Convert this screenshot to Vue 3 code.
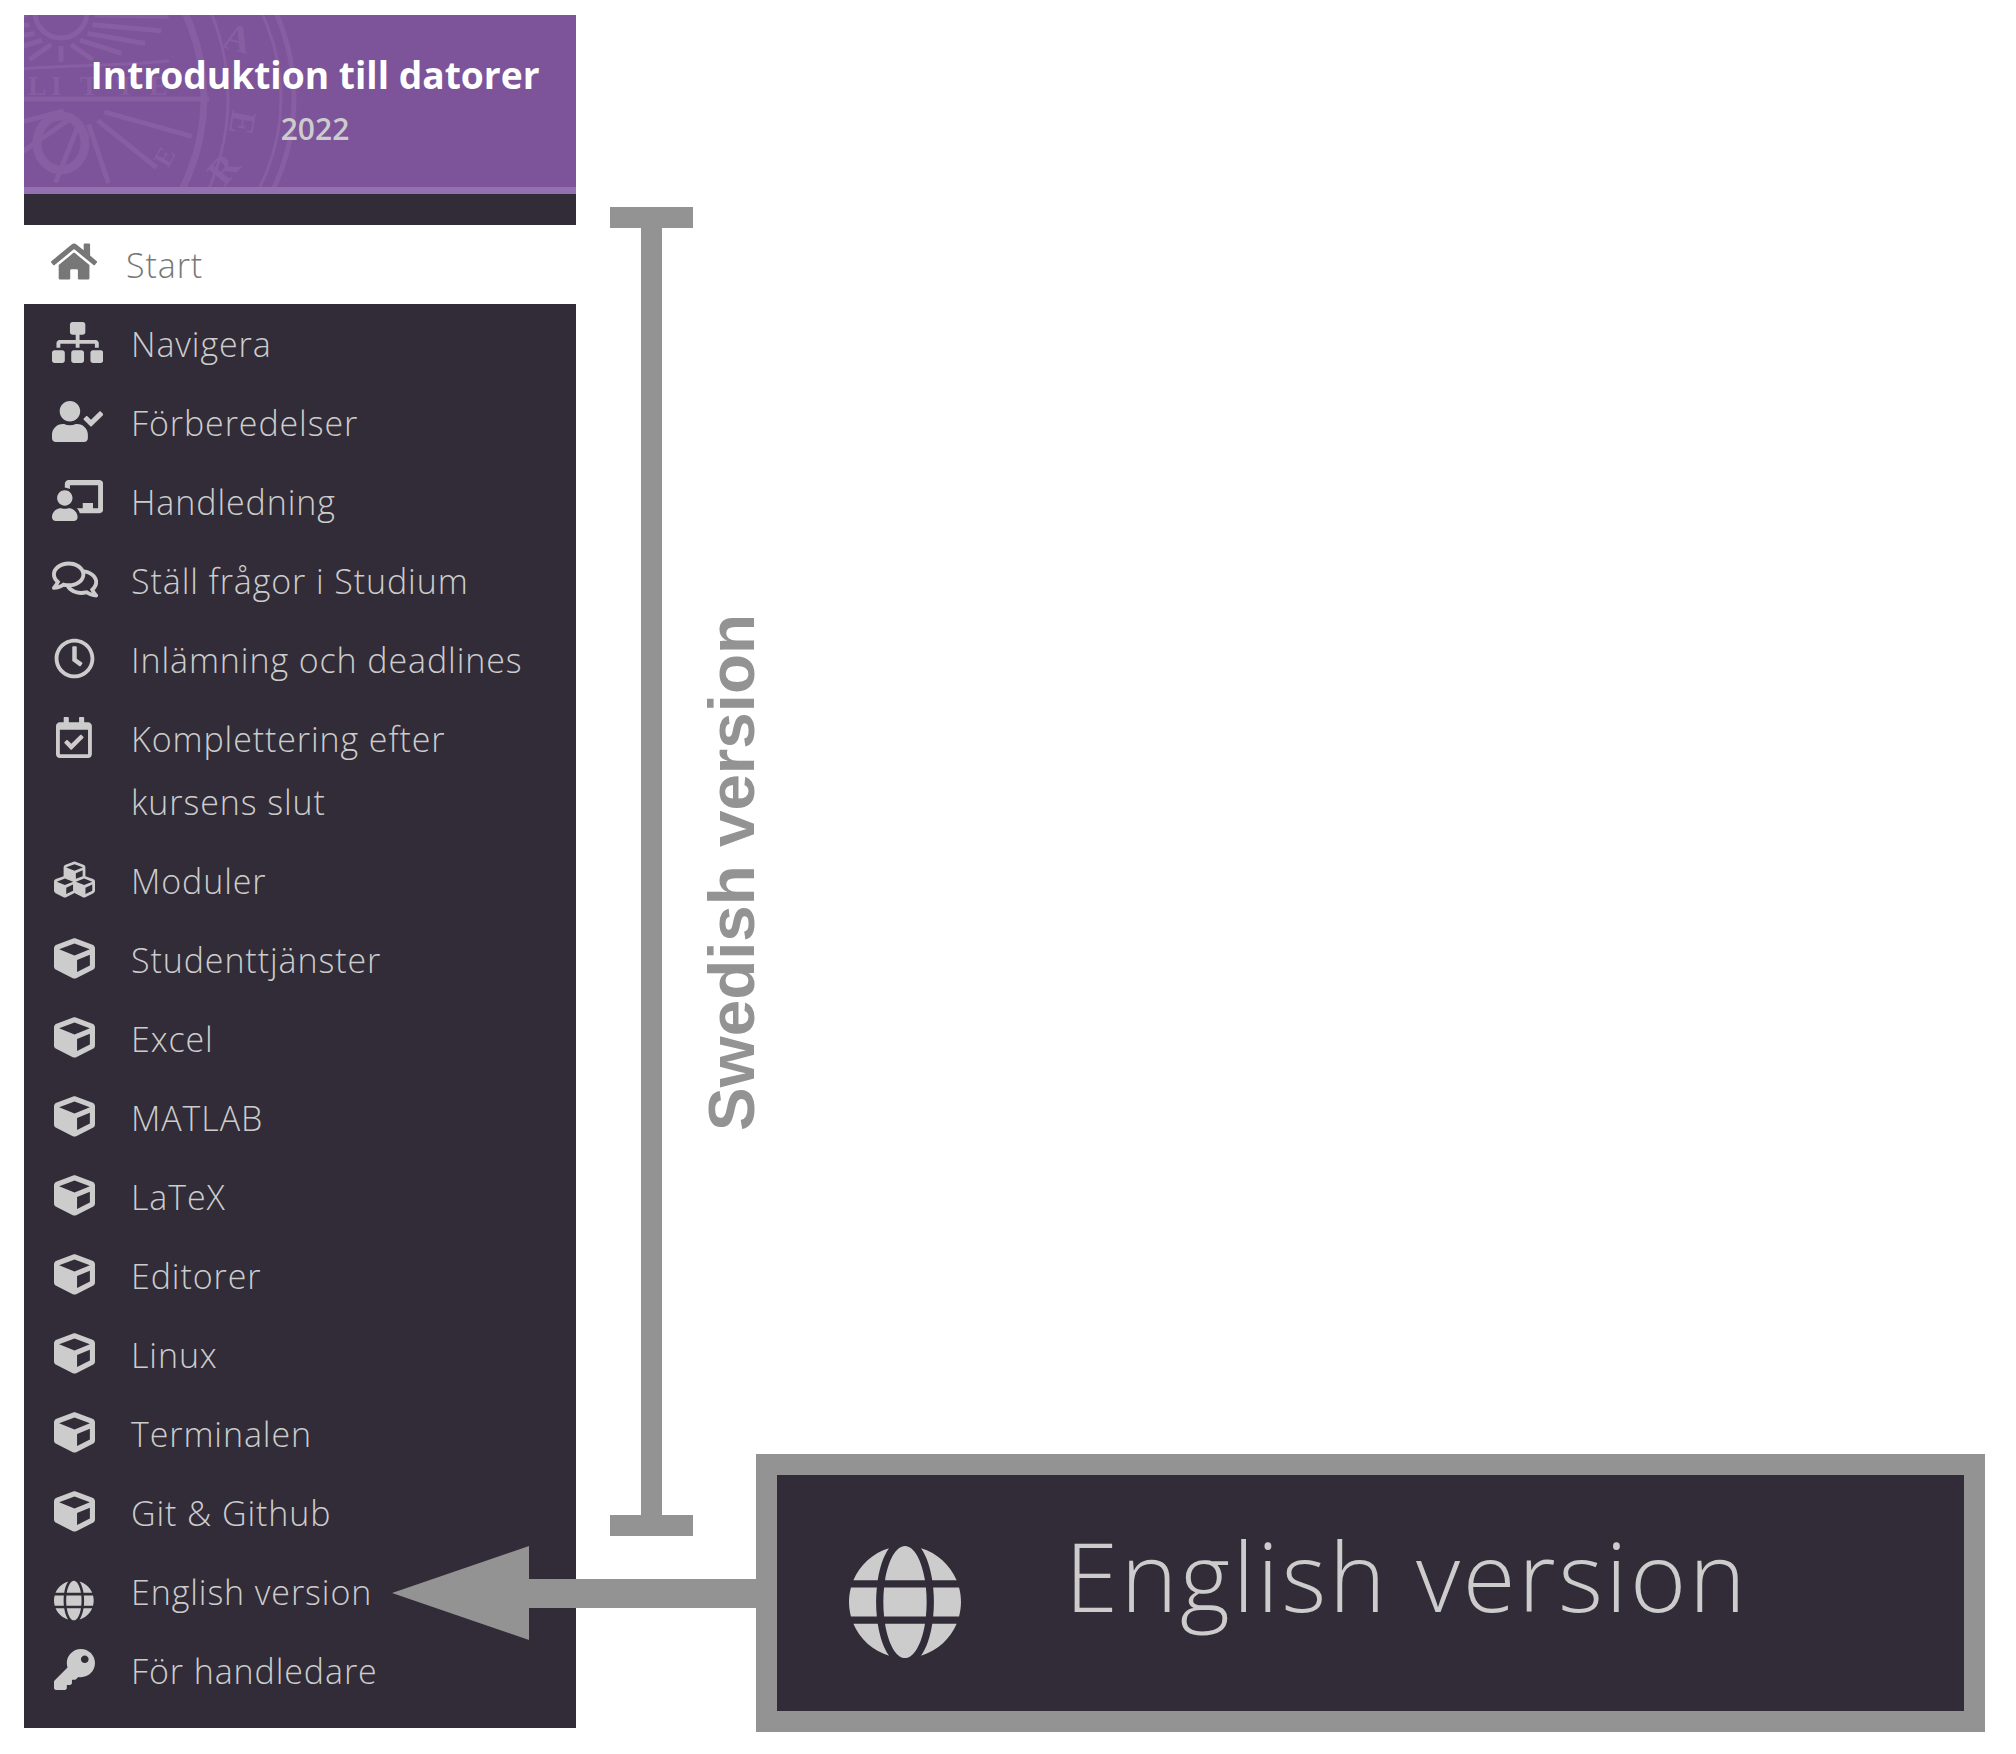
<script setup>
const P = {
  home: [576, 'M280.37 148.26L96 300.11V464a16 16 0 0 0 16 16l112.06-.29a16 16 0 0 0 15.92-16V368a16 16 0 0 1 16-16h64a16 16 0 0 1 16 16v95.64a16 16 0 0 0 16 16.05L464 480a16 16 0 0 0 16-16V300L295.67 148.26a12.19 12.19 0 0 0-15.3 0zM571.6 251.47L488 182.56V44.05a12 12 0 0 0-12-12h-56a12 12 0 0 0-12 12v72.61L318.47 43a48 48 0 0 0-61 0L4.34 251.47a12 12 0 0 0-1.6 16.9l25.5 31A12 12 0 0 0 45.15 301l235.22-193.74a12.19 12.19 0 0 1 15.3 0L530.9 301a12 12 0 0 0 16.9-1.6l25.5-31a12 12 0 0 0-1.7-16.93z'],
  sitemap: [640, 'M128 352H32c-17.67 0-32 14.33-32 32v96c0 17.67 14.33 32 32 32h96c17.67 0 32-14.33 32-32v-96c0-17.67-14.33-32-32-32zm-24-80h192v48h48v-48h192v48h48v-57.59c0-21.17-17.23-38.41-38.41-38.41H344v-64h40c17.67 0 32-14.33 32-32V32c0-17.67-14.33-32-32-32H256c-17.67 0-32 14.33-32 32v96c0 17.67 14.33 32 32 32h40v64H94.41C73.23 224 56 241.23 56 262.41V320h48v-48zm264 80h-96c-17.67 0-32 14.33-32 32v96c0 17.67 14.33 32 32 32h96c17.67 0 32-14.33 32-32v-96c0-17.67-14.33-32-32-32zm240 0h-96c-17.67 0-32 14.33-32 32v96c0 17.67 14.33 32 32 32h96c17.67 0 32-14.33 32-32v-96c0-17.67-14.33-32-32-32z'],
  userCheck: [640, 'M224 256c70.7 0 128-57.3 128-128S294.7 0 224 0 96 57.3 96 128s57.3 128 128 128zm89.6 32h-16.7c-22.2 10.2-46.9 16-72.9 16s-50.6-5.8-72.9-16h-16.7C60.2 288 0 348.2 0 422.4V464c0 26.5 21.5 48 48 48h352c26.5 0 48-21.5 48-48v-41.6c0-74.2-60.2-134.4-134.4-134.4zm323-128.4l-27.8-28.1c-4.6-4.7-12.1-4.7-16.8-.1l-104.8 104-45.5-45.8c-4.6-4.7-12.1-4.7-16.8-.1l-28.1 27.9c-4.7 4.6-4.7 12.1-.1 16.8l81.7 82.3c4.6 4.7 12.1 4.7 16.8.1l141.3-140.2c4.6-4.7 4.7-12.2.1-16.8z'],
  chalk: [640, 'M208 352c-2.39 0-4.78.35-7.06 1.09C187.98 357.3 174.35 360 160 360c-14.35 0-27.98-2.7-40.95-6.91-2.28-.74-4.66-1.09-7.05-1.09C49.94 352-.33 402.48 0 464.62.14 490.88 21.73 512 48 512h224c26.27 0 47.86-21.12 48-47.38.33-62.14-49.94-112.62-112-112.62zm-48-32c53.02 0 96-42.98 96-96s-42.98-96-96-96-96 42.98-96 96 42.98 96 96 96zM592 0H208c-26.47 0-48 22.25-48 49.59V96c23.42 0 45.1 6.78 64 17.8V64h352v288h-64v-64H384v64h-76.24c19.1 16.69 33.12 38.73 39.69 64H592c26.47 0 48-22.25 48-49.59V49.59C640 22.25 618.47 0 592 0z'],
  comments: [576, 'M532 386.2c27.5-27.1 44-61.1 44-98.2 0-80-76.5-146.1-176.2-157.9C368.3 72.5 294.3 32 208 32 93.1 32 0 103.6 0 192c0 37 16.5 71 44 98.2-15.3 30.7-37.3 54.5-37.7 54.9-6.3 6.7-8.1 16.5-4.4 25 3.6 8.5 12 14 21.2 14 53.5 0 96.7-20.2 125.2-38.8 9.2 2.1 18.7 3.7 28.4 4.9C208.1 407.6 281.8 448 368 448c20.8 0 40.8-2.4 59.8-6.8C456.3 459.7 499.4 480 553 480c9.2 0 17.5-5.5 21.2-14 3.6-8.5 1.9-18.3-4.4-25-.4-.3-22.5-24.1-37.8-54.8zm-392.8-92.3L122.1 305c-14.1 9.1-28.5 16.3-43.1 21.4 2.7-4.7 5.4-9.7 8-14.8l15.5-31.1L77.7 256C64.2 242.6 48 220.7 48 192c0-60.7 73.3-112 160-112s160 51.3 160 112-73.3 112-160 112c-16.5 0-33-1.9-49-5.6l-19.8-4.5zM498.3 352l-24.7 24.4 15.5 31.1c2.6 5.1 5.3 10.1 8 14.8-14.6-5.1-29-12.3-43.1-21.4l-17.1-11.1-19.9 4.6c-16 3.7-32.5 5.6-49 5.6-54 0-102.2-20.1-131.3-49.7C338 339.5 416 272.9 416 192c0-3.4-.4-6.7-.7-10C479.7 196.5 528 238.8 528 288c0 28.7-16.2 50.6-29.7 64z'],
  clock: [512, 'M256 8C119 8 8 119 8 256s111 248 248 248 248-111 248-248S393 8 256 8zm0 448c-110.5 0-200-89.5-200-200S145.5 56 256 56s200 89.5 200 200-89.5 200-200 200zm61.8-104.4l-84.9-61.7c-3.1-2.3-4.9-5.9-4.9-9.7V116c0-6.6 5.4-12 12-12h32c6.6 0 12 5.4 12 12v141.7l66.8 48.6c5.4 3.9 6.5 11.4 2.6 16.8L334.6 349c-3.9 5.3-11.4 6.5-16.8 2.6z'],
  calendar: [448, 'M400 64h-48V12c0-6.627-5.373-12-12-12h-40c-6.627 0-12 5.373-12 12v52H160V12c0-6.627-5.373-12-12-12h-40c-6.627 0-12 5.373-12 12v52H48C21.49 64 0 85.49 0 112v352c0 26.51 21.49 48 48 48h352c26.51 0 48-21.49 48-48V112c0-26.51-21.49-48-48-48zm-6 400H54a6 6 0 0 1-6-6V160h352v298a6 6 0 0 1-6 6zm-52.849-200.65L198.842 404.519c-4.705 4.667-12.303 4.637-16.971-.068l-75.091-75.699c-4.667-4.705-4.637-12.303.068-16.971l22.719-22.536c4.705-4.667 12.303-4.637 16.97.069l44.104 44.461 111.072-110.181c4.705-4.667 12.303-4.637 16.971.068l22.536 22.718c4.667 4.705 4.636 12.303-.069 16.97z'],
  cubes: [512, 'M488.6 250.2L392 214V105.5c0-15-9.3-28.4-23.4-33.7l-100-37.5c-8.1-3.1-17.1-3.1-25.3 0l-100 37.5c-14.1 5.3-23.4 18.7-23.4 33.7V214l-96.6 36.2C9.3 255.5 0 268.9 0 283.9V394c0 13.6 7.7 26.1 19.9 32.2l100 50c10.1 5.1 22.1 5.1 32.2 0l103.9-52 103.9 52c10.1 5.1 22.1 5.1 32.2 0l100-50c12.2-6.1 19.9-18.6 19.9-32.2V283.9c0-15-9.3-28.4-23.4-33.7zM358 214.8l-85 31.9v-68.2l85-37v73.3zM154 104.1l102-38.2 102 38.2v.6l-102 41.4-102-41.4v-.6zm84 291.1l-85 42.5v-79.1l85-38.8v75.4zm0-112l-102 41.4-102-41.4v-.6l102-38.2 102 38.2v.6zm240 112l-85 42.5v-79.1l85-38.8v75.4zm0-112l-102 41.4-102-41.4v-.6l102-38.2 102 38.2v.6z'],
  cube: [512, 'M239.1 6.3l-208 78c-18.7 7-31.1 25-31.1 45v225.1c0 18.2 10.3 34.8 26.5 42.9l208 104c13.5 6.8 29.4 6.8 42.9 0l208-104c16.3-8.1 26.5-24.8 26.5-42.9V129.3c0-20-12.4-37.9-31.1-44.9l-208-78C262 2.2 250 2.2 239.1 6.3zM256 68.4l192 72v1.1l-192 78-192-78v-1.1l192-72zm32 356V275.5l160-65v133.9l-160 80z'],
  globe: [496, 'M336.5 160C322 70.7 287.8 8 248 8s-74 62.7-88.5 152h177zM152 256c0 22.2 1.2 43.5 3.3 64h185.3c2.1-20.5 3.3-41.8 3.3-64s-1.2-43.5-3.3-64H155.3c-2.1 20.5-3.3 41.8-3.3 64zm324.7-96c-28.6-67.9-86.5-120.4-158-141.6 24.4 33.8 41.2 84.7 50 141.6h108zM177.2 18.4C105.8 39.6 47.8 92.1 19.3 160h108c8.7-56.9 25.5-107.8 49.9-141.6zM487.4 192H372.7c2.1 21 3.3 42.5 3.3 64s-1.2 43-3.3 64h114.6c5.5-20.5 8.6-41.8 8.6-64s-3.1-43.5-8.5-64zM120 256c0-21.5 1.2-43 3.3-64H8.6C3.2 212.5 0 233.8 0 256s3.2 43.5 8.6 64h114.6c-2-21-3.2-42.5-3.2-64zm39.5 96c14.5 89.3 48.7 152 88.5 152s74-62.7 88.5-152h-177zm159.3 141.6c71.4-21.2 129.4-73.7 158-141.6h-108c-8.8 56.9-25.6 107.8-50 141.6zM19.3 352c28.6 67.9 86.5 120.4 158 141.6-24.4-33.8-41.2-84.7-50-141.6h-108z'],
  key: [512, 'M512 176.001C512 273.203 433.202 352 336 352c-11.22 0-22.19-1.062-32.827-3.069l-24.012 27.014A23.999 23.999 0 0 1 261.223 384H224v40c0 13.255-10.745 24-24 24h-40v40c0 13.255-10.745 24-24 24H24c-13.255 0-24-10.745-24-24v-78.059c0-6.365 2.529-12.47 7.029-16.971l161.802-161.802C163.108 213.814 160 195.271 160 176 160 78.798 238.797.001 335.999 0 433.488-.001 512 78.511 512 176.001zM336 128c0 26.51 21.49 48 48 48s48-21.49 48-48-21.49-48-48-48-48 21.49-48 48z'],
}
const items = [
  { label: 'Start', icon: 'home', cls: 'active' },
  { label: 'Navigera', icon: 'sitemap', cls: 'wide' },
  { label: 'Förberedelser', icon: 'userCheck', cls: 'wide' },
  { label: 'Handledning', icon: 'chalk', cls: 'wide' },
  { label: 'Ställ frågor i Studium', icon: 'comments', cls: 'wide' },
  { label: 'Inlämning och deadlines', icon: 'clock', cls: '' },
  { label: 'Komplettering efter kursens slut', icon: 'calendar', cls: 'narrow' },
  { label: 'Moduler', icon: 'cubes', cls: '' },
  { label: 'Studenttjänster', icon: 'cube', cls: '' },
  { label: 'Excel', icon: 'cube', cls: '' },
  { label: 'MATLAB', icon: 'cube', cls: '' },
  { label: 'LaTeX', icon: 'cube', cls: '' },
  { label: 'Editorer', icon: 'cube', cls: '' },
  { label: 'Linux', icon: 'cube', cls: '' },
  { label: 'Terminalen', icon: 'cube', cls: '' },
  { label: 'Git & Github', icon: 'cube', cls: '' },
  { label: 'English version', icon: 'globe', cls: 'low' },
  { label: 'För handledare', icon: 'key', cls: '' },
]
const iconWidth = (name) => (P[name][0] * 41) / 512 + 'px'
const rad = (a) => (a * Math.PI) / 180
const rays = Array.from({ length: 12 }, (_, i) => rad(-12 + i * 17))
const spokes = [24, 52, 78, 104, 132, 158].map(rad)
</script>

<template>
  <div class="page">
    <aside class="sidebar">
      <header class="banner">
        <svg class="seal" viewBox="0 0 552 172" aria-hidden="true">
          <g fill="none" stroke="#875ea2">
            <circle cx="60" cy="83" r="210" stroke-width="5" />
            <circle cx="60" cy="83" r="197" stroke-width="3" />
            <circle cx="-20" cy="83" r="224" stroke-width="3" />
            <circle cx="-20" cy="83" r="200" stroke-width="7" />
            <circle cx="37" cy="-3" r="26" stroke-width="5" />
            <path d="M-5 84H185" stroke-width="5" />
            <path d="M-5 54C50 50 110 50 145 46" stroke-width="3" />
            <ellipse cx="37" cy="128" rx="24" ry="27" stroke-width="9" />
            <line v-for="a in spokes" :key="a" :x1="60 + 22 * Math.cos(a)" :y1="88 + 22 * Math.sin(a)" :x2="60 + 118 * Math.cos(a)" :y2="88 + 82 * Math.sin(a)" stroke-width="5" />
            <line v-for="a in rays" :key="a" :x1="37 + 34 * Math.cos(a)" :y1="-3 + 34 * Math.sin(a)" :x2="37 + 108 * Math.cos(a)" :y2="-3 + 50 * Math.sin(a)" stroke-width="5" />
          </g>
          <g fill="#875ea2" font-family="Liberation Serif, serif" font-weight="700">
            <text x="4" y="80" font-size="28">L</text>
            <text x="27" y="80" font-size="28">I</text>
            <text x="56" y="80" font-size="28">T</text>
            <text x="92" y="80" font-size="28">T</text>
            <text x="125" y="80" font-size="28">E</text>
            <text x="200" y="36" font-size="38" transform="rotate(15 214 22)">A</text>
            <text x="206" y="124" font-size="36" transform="rotate(100 220 110)">E</text>
            <text x="130" y="150" font-size="26" transform="rotate(-60 140 140)">E</text>
            <text x="186" y="168" font-size="38" transform="rotate(-50 198 155)">R</text>
          </g>
        </svg>
        <h1 class="title">Introduktion till datorer</h1>
        <p class="year">2022</p>
      </header>
      <div class="spacer"></div>
      <nav class="menu">
        <a v-for="item in items" :key="item.label" class="row" :class="item.cls">
          <span class="icon-cell">
            <svg class="icon" :style="{ width: iconWidth(item.icon) }" :viewBox="`0 0 ${P[item.icon][0]} 512`" aria-hidden="true">
              <path :d="P[item.icon][1]" />
            </svg>
          </span>
          <span class="label">{{ item.label }}</span>
        </a>
      </nav>
    </aside>

    <div class="bracket" aria-hidden="true">
      <span class="cap"></span>
      <span class="stem"></span>
      <span class="cap"></span>
    </div>
    <div class="swedish">Swedish version</div>

    <svg class="arrow" viewBox="0 0 365 94" aria-hidden="true">
      <polygon points="0,47 137,0 137,33 365,33 365,62 137,62 137,94" />
    </svg>

    <div class="callout">
      <svg class="callout-icon" viewBox="0 0 496 512" aria-hidden="true">
        <path :d="P.globe[1]" />
      </svg>
      <span class="callout-text">English version</span>
    </div>
  </div>
</template>

<style>
body { background: #fff; }
</style>

<style scoped>
.page {
  position: relative;
  width: 2016px;
  height: 1754px;
  padding: 15px 0 0 24px;
  box-sizing: border-box;
  font-family: "Open Sans", "Liberation Sans", sans-serif;
}
.sidebar {
  width: 552px;
  background: #312c37;
  padding-bottom: 18px;
}
.banner {
  position: relative;
  height: 172px;
  box-sizing: content-box;
  background: #7d5399;
  border-bottom: 7px solid #9371b0;
  overflow: hidden;
  padding-left: 30px;
  text-align: center;
}
.seal {
  position: absolute;
  left: 0;
  top: 0;
  width: 552px;
  height: 172px;
}
.title {
  position: relative;
  margin: 0;
  padding-top: 34px;
  font-size: 37.2px;
  line-height: 52px;
  font-weight: 700;
  color: #fff;
}
.year {
  position: relative;
  margin: 8px 0 0;
  font-size: 30px;
  line-height: 40px;
  font-weight: 600;
  color: #ccc;
}
.spacer { height: 31px; }
.menu { display: flex; flex-direction: column; }
.row {
  display: flex;
  align-items: flex-start;
  padding: 8px 44px 7px 30px;
  color: #ccc;
  fill: #ccc;
}
.icon-cell {
  flex: 0 0 77px;
  height: 63px;
  display: flex;
  align-items: center;
}
.icon { height: 41px; flex: none; margin-top: -2px; }
.wide .icon { margin-left: -2px; }
.narrow .icon { margin-left: 2px; }
.low .icon { margin-top: 18px; }
.label {
  margin-top: 1px;
  font-size: 34px;
  line-height: 63px;
  font-weight: 300;
  letter-spacing: 0.9px;
}
.active {
  background: #fff;
  color: #777;
  fill: #777;
}
.active .icon-cell { flex-basis: 72px; }
.active .icon { margin-left: -3.5px; margin-top: -7px; }

.bracket {
  position: absolute;
  left: 610px;
  top: 207px;
  width: 83px;
  height: 1329px;
  display: flex;
  flex-direction: column;
  align-items: center;
}
.cap { width: 100%; height: 21px; background: #939393; flex: none; }
.stem { width: 21px; flex: 1; background: #939393; }
.swedish {
  position: absolute;
  left: 699px;
  top: 614px;
  writing-mode: vertical-rl;
  transform: rotate(180deg);
  font-family: "Liberation Sans", sans-serif;
  font-weight: 700;
  font-size: 65.5px;
  line-height: 1;
  color: #939393;
  white-space: nowrap;
}
.arrow {
  position: absolute;
  left: 392px;
  top: 1546px;
  width: 365px;
  height: 94px;
  fill: #939393;
}
.callout {
  position: absolute;
  left: 756px;
  top: 1454px;
  width: 1229px;
  height: 278px;
  box-sizing: border-box;
  border: 21px solid #939393;
  background: #312c37;
  display: flex;
  align-items: flex-start;
  padding: 69px 0 0 72px;
  gap: 104px;
  color: #ccc;
  fill: #ccc;
}
.callout-icon { width: 112px; height: 116px; flex: none; }
.callout-text {
  font-size: 96px;
  line-height: 110px;
  font-weight: 300;
  letter-spacing: 2.7px;
  margin-top: -24px;
}
</style>
